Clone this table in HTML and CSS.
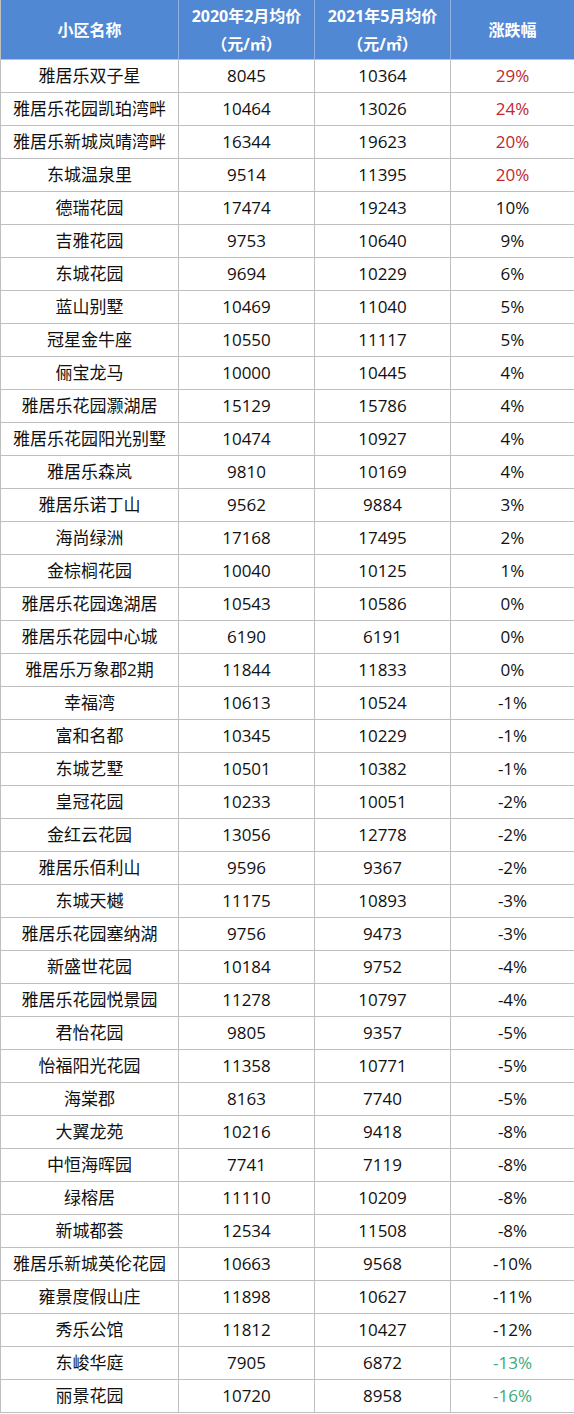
FILE: index.html
```html
<!DOCTYPE html>
<html>
<head>
<meta charset="utf-8">
<link rel="stylesheet" href="styles.css">
</head>
<body>
<table class="tbl">
<colgroup><col class="c1"><col class="c2"><col class="c3"><col class="c4"></colgroup>
<thead>
<tr><th>小区名称</th><th>2020年2月均价<br>（元/㎡）</th><th>2021年5月均价<br>（元/㎡）</th><th>涨跌幅</th></tr>
</thead>
<tbody>
<tr><td>雅居乐双子星</td><td>8045</td><td>10364</td><td class="up">29%</td></tr>
<tr><td>雅居乐花园凯珀湾畔</td><td>10464</td><td>13026</td><td class="up">24%</td></tr>
<tr><td>雅居乐新城岚晴湾畔</td><td>16344</td><td>19623</td><td class="up">20%</td></tr>
<tr><td>东城温泉里</td><td>9514</td><td>11395</td><td class="up">20%</td></tr>
<tr><td>德瑞花园</td><td>17474</td><td>19243</td><td>10%</td></tr>
<tr><td>吉雅花园</td><td>9753</td><td>10640</td><td>9%</td></tr>
<tr><td>东城花园</td><td>9694</td><td>10229</td><td>6%</td></tr>
<tr><td>蓝山别墅</td><td>10469</td><td>11040</td><td>5%</td></tr>
<tr><td>冠星金牛座</td><td>10550</td><td>11117</td><td>5%</td></tr>
<tr><td>俪宝龙马</td><td>10000</td><td>10445</td><td>4%</td></tr>
<tr><td>雅居乐花园灏湖居</td><td>15129</td><td>15786</td><td>4%</td></tr>
<tr><td>雅居乐花园阳光别墅</td><td>10474</td><td>10927</td><td>4%</td></tr>
<tr><td>雅居乐森岚</td><td>9810</td><td>10169</td><td>4%</td></tr>
<tr><td>雅居乐诺丁山</td><td>9562</td><td>9884</td><td>3%</td></tr>
<tr><td>海尚绿洲</td><td>17168</td><td>17495</td><td>2%</td></tr>
<tr><td>金棕榈花园</td><td>10040</td><td>10125</td><td>1%</td></tr>
<tr><td>雅居乐花园逸湖居</td><td>10543</td><td>10586</td><td>0%</td></tr>
<tr><td>雅居乐花园中心城</td><td>6190</td><td>6191</td><td>0%</td></tr>
<tr><td>雅居乐万象郡2期</td><td>11844</td><td>11833</td><td>0%</td></tr>
<tr><td>幸福湾</td><td>10613</td><td>10524</td><td>-1%</td></tr>
<tr><td>富和名都</td><td>10345</td><td>10229</td><td>-1%</td></tr>
<tr><td>东城艺墅</td><td>10501</td><td>10382</td><td>-1%</td></tr>
<tr><td>皇冠花园</td><td>10233</td><td>10051</td><td>-2%</td></tr>
<tr><td>金红云花园</td><td>13056</td><td>12778</td><td>-2%</td></tr>
<tr><td>雅居乐佰利山</td><td>9596</td><td>9367</td><td>-2%</td></tr>
<tr><td>东城天樾</td><td>11175</td><td>10893</td><td>-3%</td></tr>
<tr><td>雅居乐花园塞纳湖</td><td>9756</td><td>9473</td><td>-3%</td></tr>
<tr><td>新盛世花园</td><td>10184</td><td>9752</td><td>-4%</td></tr>
<tr><td>雅居乐花园悦景园</td><td>11278</td><td>10797</td><td>-4%</td></tr>
<tr><td>君怡花园</td><td>9805</td><td>9357</td><td>-5%</td></tr>
<tr><td>怡福阳光花园</td><td>11358</td><td>10771</td><td>-5%</td></tr>
<tr><td>海棠郡</td><td>8163</td><td>7740</td><td>-5%</td></tr>
<tr><td>大翼龙苑</td><td>10216</td><td>9418</td><td>-8%</td></tr>
<tr><td>中恒海晖园</td><td>7741</td><td>7119</td><td>-8%</td></tr>
<tr><td>绿榕居</td><td>11110</td><td>10209</td><td>-8%</td></tr>
<tr><td>新城都荟</td><td>12534</td><td>11508</td><td>-8%</td></tr>
<tr><td>雅居乐新城英伦花园</td><td>10663</td><td>9568</td><td>-10%</td></tr>
<tr><td>雍景度假山庄</td><td>11898</td><td>10627</td><td>-11%</td></tr>
<tr><td>秀乐公馆</td><td>11812</td><td>10427</td><td>-12%</td></tr>
<tr><td>东峻华庭</td><td>7905</td><td>6872</td><td class="down">-13%</td></tr>
<tr><td>丽景花园</td><td>10720</td><td>8958</td><td class="down">-16%</td></tr>
</tbody>
</table>
</body>
</html>
```
FILE: styles.css
```css
html, body {
  margin: 0;
  padding: 0;
  background: #ffffff;
}
.tbl {
  border-collapse: collapse;
  table-layout: fixed;
  width: 574px;
  font-family: "Open Sans", "Noto Sans CJK SC", sans-serif;
  font-size: 17px;
  color: #111111;
}
.c1 { width: 178px; }
.c2 { width: 136px; }
.c3 { width: 136px; }
.c4 { width: 124px; }
.tbl th {
  background: #5088d4;
  color: #ffffff;
  font-weight: bold;
  font-size: 16px;
  height: 59px;
  padding: 0;
  line-height: 28px;
  text-align: center;
  border: 1px solid #bfbfbf;
  border-left-color: #8fb2e2;
  border-right-color: #8fb2e2;
  border-top: none;
}
.tbl th:first-child { border-left-color: #bfbfbf; }
.tbl th:last-child { border-right-color: #bfbfbf; }
.tbl td {
  height: 32px;
  padding: 0;
  text-align: center;
  border: 1px solid #bfbfbf;
  line-height: 20px;
}
.tbl td.up { color: #c0282f; }
.tbl td.down { color: #3aaa80; }
```
